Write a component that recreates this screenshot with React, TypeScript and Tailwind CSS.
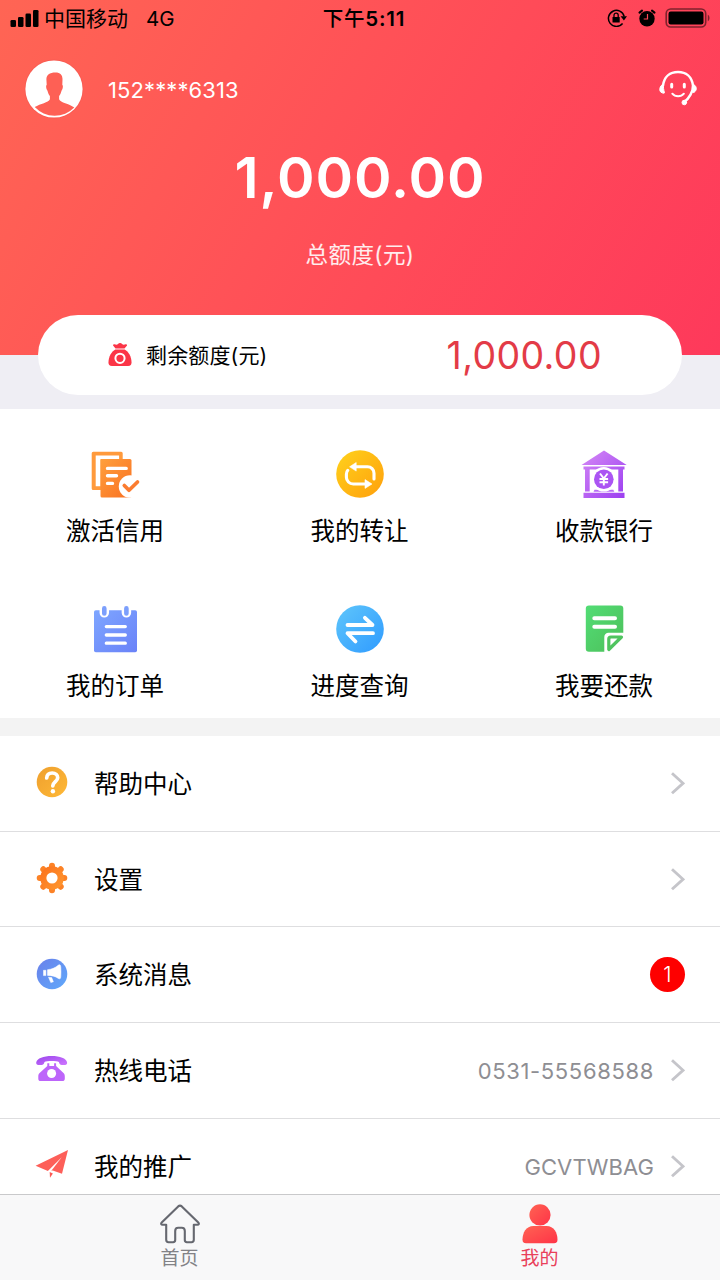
import type { ReactNode } from "react";

const Gradient = ({ id, from, to }: { id: string; from: string; to: string }) => (
    <defs>
        <linearGradient id={id} x1="0" y1="0" x2="1" y2="1">
            <stop offset="0" stopColor={from} />
            <stop offset="1" stopColor={to} />
        </linearGradient>
    </defs>
);

const CreditIcon = () => (
    <svg viewBox="0 0 48 48" className="size-12 overflow-visible" fill="none">
        <Gradient id="credit" from="#ffa03c" to="#f97022" />
        <path d="M2.200 1.700h28a1.500 1.500 0 0 1 1.500 1.500V10H10v30H2.200A1.500 1.500 0 0 1 .7 38.500V3.200a1.500 1.500 0 0 1 1.500-1.500Z" fill="#ff9a3c" />
        <path d="M4.700 5.400h23.400V9H9.500v27.200H4.700Z" fill="#fff" />
        <rect x="9.500" y="9" width="31" height="38.500" rx="1.500" fill="url(#credit)" />
        <path d="M16.500 18.400h18.700M16.500 25.800h9M16.500 33.400h5" stroke="#fff" strokeWidth="3.400" strokeLinecap="round" />
        <circle cx="39" cy="36.500" r="11.200" fill="#fff" />
        <path d="m33.300 35.500 4.700 4.800 8.500-8.300" stroke="#fb7c30" strokeWidth="3.700" strokeLinecap="round" strokeLinejoin="round" />
    </svg>
);

const TransferIcon = () => (
    <svg viewBox="0 0 48 48" className="size-12" fill="none">
        <Gradient id="transfer" from="#ffd21c" to="#ff9f0c" />
        <circle cx="24" cy="24" r="23.800" fill="url(#transfer)" />
        <path d="M18 16.800h13.500a6.500 6.500 0 0 1 6.500 6.500v5.700M11.800 20.300c-.9 1-1.400 2.200-1.400 3.700v3.200a6.800 6.800 0 0 0 6.800 6.800h14" stroke="#fff" strokeWidth="3.100" strokeLinecap="round" />
        <path d="m13.600 16.800 6.600-4.300v8.600ZM36 34l-7 4.400v-8.800Z" fill="#fff" stroke="#fff" strokeWidth=".6" strokeLinejoin="round" />
    </svg>
);

const BankIcon = () => (
    <svg viewBox="0 0 48 48" className="size-12" fill="none">
        <Gradient id="bank" from="#d68af6" to="#9a3cf0" />
        <path d="M24 .4 46.700 15H1.500ZM3.500 16.400h41v3H43V41.500h-4.700v-22H9.700v22H5v-22H3.500ZM3.500 42.800h41V48h-41Z" fill="url(#bank)" />
        <path d="M14.500 39.800h18.800l1 1.900H13.500Z" fill="#b86bf5" />
        <circle cx="23.800" cy="29.200" r="12.300" fill="#fff" />
        <circle cx="23.800" cy="29.200" r="9.800" fill="#ab55f3" />
        <path d="m20 23.500 3.800 5 3.800-5M19.500 29h8.600M19.500 32.200h8.600M23.800 28.500v7" stroke="#fff" strokeWidth="1.900" />
    </svg>
);

const OrderIcon = () => (
    <svg viewBox="0 0 48 48" className="size-12" fill="none">
        <Gradient id="order" from="#7ea6ff" to="#6a82f8" />
        <rect x="3" y="5.200" width="43" height="42" rx="1.800" fill="url(#order)" />
        <path d="M13.300 4v3.800M35.400 4v3.800" stroke="#fff" strokeWidth="9.500" strokeLinecap="round" />
        <path d="M13.300 3.400v5M35.400 3.400v5" stroke="#7c9ffc" strokeWidth="4.600" strokeLinecap="round" />
        <path d="M15.300 21.600h19M15.300 30h19M15.300 38.200h19" stroke="#fff" strokeWidth="3.300" strokeLinecap="round" />
    </svg>
);

const ProgressIcon = () => (
    <svg viewBox="0 0 48 48" className="size-12" fill="none">
        <Gradient id="progress" from="#5fc6fb" to="#2f9bff" />
        <circle cx="24" cy="24" r="23.800" fill="url(#progress)" />
        <path d="M11.500 20h25l-7.600-7.200M37 28.200H11.500l8 8.300" stroke="#fff" strokeWidth="3.800" strokeLinecap="round" strokeLinejoin="round" />
    </svg>
);

const RepayIcon = () => (
    <svg viewBox="0 0 48 48" className="size-12" fill="none">
        <Gradient id="repay" from="#52dd75" to="#4dbf5a" />
        <path d="M9 .4h31.300a3 3 0 0 1 3 3v24.400H28.500a4.200 4.200 0 0 0-4.200 4.200v14.700H9a3.200 3.200 0 0 1-3.200-3.200V3.600A3.200 3.200 0 0 1 9 .4Z" fill="url(#repay)" />
        <path d="M14.300 13.200H35M14.300 21.700H35" stroke="#fff" strokeWidth="4" strokeLinecap="round" />
        <path d="M28.800 44.500V34a2 2 0 0 1 2-2h10.700Z" stroke="#4fc45f" strokeWidth="3.200" strokeLinejoin="round" />
    </svg>
);

const HelpIcon = () => (
    <svg viewBox="0 0 32 32" className="size-8" fill="none">
        <Gradient id="help" from="#ee9f2e" to="#ffb937" />
        <circle cx="16" cy="16" r="15.300" fill="url(#help)" />
        <path d="M10.700 12c.2-3.200 2.300-5 5.500-5 3.300 0 5.500 1.900 5.500 4.700 0 3.600-4.600 4.200-4.900 8.100" stroke="#fff" strokeWidth="3.700" strokeLinecap="round" />
        <circle cx="16.900" cy="25.200" r="2.200" fill="#fff" />
    </svg>
);

const SettingsIcon = () => (
    <svg viewBox="0 0 32 32" className="size-8" fill="none">
        <Gradient id="settings" from="#fb6f1c" to="#ff9a30" />
        <g stroke="#fc8226" strokeWidth="6" strokeLinecap="round">
            <path d="M16 3.700v24.600M3.700 16h24.600M7.300 7.300l17.400 17.400M24.700 7.300 7.300 24.700" />
        </g>
        <circle cx="16" cy="16" r="11.800" fill="url(#settings)" />
        <circle cx="16" cy="16" r="5.600" fill="#fff" />
    </svg>
);

const MessageIcon = () => (
    <svg viewBox="0 0 32 32" className="size-8" fill="none">
        <Gradient id="message" from="#6a80ea" to="#5fa9fb" />
        <circle cx="16" cy="16" r="15.300" fill="url(#message)" />
        <path d="M11.500 11.700c4-.3 7.500-1.700 11-4.600 1.600-1 2.100 0 2.300 2.100a62 62 0 0 1 0 9.500c-.2 2.300-1.200 2.600-2.500 1.700-3.300-2.200-6.500-3-10.800-3ZM7.500 12.300h2.400v5.300H7.500ZM12.500 19.200l3.200.4 1.700 4.200-2.600.8Z" fill="#fff" stroke="#fff" strokeWidth=".5" strokeLinejoin="round" />
    </svg>
);

const PhoneIcon = () => (
    <svg viewBox="0 0 32 32" className="size-8" fill="none">
        <Gradient id="phone" from="#9a45ec" to="#cf77ff" />
        <path d="M.2 9.400C1 5.300 7.600 3 15.700 3s14.700 2.300 15.400 6.400c.3 1.800-1 2.600-3.300 2.600-3.500 0-4.300-.8-4.900-3.100-2-1.200-12.400-1.200-14.400 0-.6 2.300-1.400 3.100-4.900 3.100C1.200 12 0 11.200.2 9.400Z" fill="url(#phone)" />
        <path d="M11.300 10.300h2v2.600h4.800v-2.600h2v2.600l7.400 7.100c1 1 1.300 2 1.300 3.500v2.300c0 1.500-1 2.300-2.400 2.300H4.700c-1.600 0-2.400-.9-2.400-2.300v-2.300c0-1.500.3-2.500 1.300-3.500l7.700-7.100Z" fill="#bd65fa" />
        <circle cx="15.600" cy="20.500" r="4.500" fill="#fff" />
    </svg>
);

const PlaneIcon = () => (
    <svg viewBox="0 0 32 32" className="size-8 overflow-visible" fill="none">
        <path d="M32 1 26 24.700l-9.300-3.300L11.900 22-.4 16.800Z" fill="#fd5f59" />
        <path d="M25.700 8.300 11.600 22.200h3.400Z" fill="#fff" />
        <path d="m13.700 23 .3 5.700 2.900-4.300Z" fill="#fc5a55" />
    </svg>
);

const Chevron = () => (
    <svg viewBox="0 0 15 24" className="h-6 w-[15px]" fill="none">
        <path d="m2 2.300 11 10-11 10" stroke="#c5c5ca" strokeWidth="2.900" />
    </svg>
);

const StatusBar = () => (
    <div className="grid h-[37px] grid-cols-3 items-center text-black">
        <div className="flex items-center pl-[10px]">
            <svg viewBox="0 0 30 18" className="mr-[4px] h-[18px] w-[30px]">
                <rect x=".5" y="10" width="5.500" height="7" rx="1.300" />
                <rect x="8" y="7" width="5.500" height="10" rx="1.300" />
                <rect x="15.500" y="3.500" width="5.500" height="13.500" rx="1.300" />
                <rect x="23" y="0" width="5.500" height="17" rx="1.300" />
            </svg>
            <span className="text-[21px]">中国移动</span>
            <span className="mt-0.5 ml-[18px] text-[20.5px]">4G</span>
        </div>
        <div className="mt-0.5 ml-[8px] text-center text-[20.5px] font-medium tracking-[0.8px]">
            下午<span className="font-semibold">5:11</span>
        </div>
        <div className="flex items-center justify-end pr-[9px]">
            <svg viewBox="0 0 20 18" className="-mt-0.5 h-[18px] w-5" fill="none">
                <path d="M15.600 14.500a8 8 0 1 1 1.600-7" stroke="#000" strokeWidth="1.500" />
                <path d="M13.600 7.300h6.400l-3.100 4.200Z" fill="#000" />
                <rect x="5.500" y="7.900" width="7.200" height="5.600" rx=".6" fill="#000" />
                <path d="M7 8V6.300a2.100 2.100 0 0 1 4.200 0V8" stroke="#000" strokeWidth="1.300" />
            </svg>
            <svg viewBox="0 0 18 18" className="-mt-0.5 ml-[11px] size-[18px]" fill="none">
                <circle cx="9" cy="9.700" r="7.700" fill="#000" />
                <path d="M1.500 3.600 4 1.600M16.500 3.600 14 1.600" stroke="#000" strokeWidth="2.100" strokeLinecap="round" />
                <path d="M9.500 5v5H5.700" stroke="#ff4a58" strokeWidth="1.200" />
            </svg>
            <svg viewBox="0 0 46 20" className="-mt-0.5 ml-[9px] h-5 w-[46px]" fill="none">
                <rect x="1.200" y="1" width="39.500" height="18" rx="4.500" stroke="#000" strokeOpacity=".5" strokeWidth="1.600" />
                <rect x="3.500" y="3.500" width="35" height="13" rx="2.200" fill="#000" />
                <path d="M42.800 6.800v6.400c2.300-.8 2.300-5.600 0-6.400Z" fill="#000" fillOpacity=".5" />
            </svg>
        </div>
    </div>
);

const Avatar = () => (
    <svg viewBox="0 0 60 60" className="size-[60px]" fill="none">
        <circle cx="30" cy="30" r="29.500" fill="#f0554d" fillOpacity=".45" />
        <circle cx="30" cy="30" r="28.600" fill="#fff" />
        <path d="M31.500 13.400c4.900 0 7.200 2.600 7 7.200l-.2 5.200c1 .6.700 4.200-.8 6-.5 2.300-1.300 3.900-2.400 5.200v3.200c1.500 3.600 9.700 4.200 15.200 8.300a27.500 27.500 0 0 1-39.600-.4c5.800-3.700 13.600-4.300 15.200-7.900V37c-1.100-1.300-1.900-2.900-2.400-5.200-1.500-1.800-1.800-5.400-.8-6l-.3-5.200c-.2-4.600 2.900-7.200 9.100-7.200Z" fill="#fe6055" />
    </svg>
);

const ServiceIcon = () => (
    <svg viewBox="0 0 40 36" className="-mt-0.5 h-9 w-10" fill="none" stroke="#fff" strokeLinecap="round">
        <path d="M5 15.500C6.200 6.700 12 2 20 2s13.800 4.700 15 13.500c.3 6-4 13-8.500 16.300" strokeWidth="2.500" />
        <path d="M5.300 14.200c-3.800.8-5 7.600-1.200 8.600.8.500 2.200.6 2.400 0-.9-2.800-1.200-5.700-1.200-8.600ZM34.700 14.200c3.800.8 5 5.600 1.600 8-.8.400-1.500.4-1.900 0 .5-2.800.5-5.100.3-8Z" fill="#fff" strokeWidth="1" />
        <path d="M13.700 14.200v2.700M26.300 14.200v2.700" strokeWidth="3" />
        <path d="M14.300 23.700c2.900 3.500 8.700 3.500 11.600 0" strokeWidth="2" />
        <circle cx="26.300" cy="32.500" r="2.300" fill="#fff" strokeWidth="1" />
    </svg>
);

const MoneyBagIcon = () => (
    <svg viewBox="0 0 24 24" className="size-6" fill="none">
        <path d="M6.500 1.300c1.800.6 2.800.4 3.500-.3.900-1.300 3.200-1.300 4.100 0 .7.700 1.800.9 3.500.3 1.500-.3 2 1 .8 2L16.500 5.500h-9L5.700 3.300c-1.200-1-.7-2.300.8-2Z" fill="#fb3547" />
        <path d="M7.300 6.500h9.400c3.800 2 6.800 7.200 6.800 12.700 0 2.500-.8 3.800-3.500 3.800H4c-2.700 0-3.500-1.300-3.500-3.800C.5 13.700 3.500 8.500 7.300 6.500Z" fill="#fb3547" />
        <circle cx="12" cy="15.300" r="4.600" stroke="#fff" strokeWidth="2" />
        <path d="m12 12.600 2.700 2.700-2.700 2.700-2.700-2.700Z" fill="#fb3547" />
    </svg>
);

const HomeIcon = () => (
    <svg viewBox="0 0 40 40" className="size-10" fill="none" stroke="#666870" strokeWidth="2.100" strokeLinejoin="round">
        <path d="M18.200 2.400 1.700 18.500c-1 1-.5 2.300.8 2.300h3.700v15c0 1.600.8 2.400 2.300 2.400h4.600c1.400 0 2.100-.7 2.100-2.100V27c0-2.100 1-3.200 3-3.200h3.600c2 0 3 1.100 3 3.200v9.100c0 1.400.7 2.100 2.100 2.100h4.600c1.500 0 2.300-.8 2.300-2.400v-15h3.700c1.300 0 1.800-1.300.8-2.300L21.800 2.400c-1.300-1.100-2.300-1.100-3.600 0Z" />
    </svg>
);

const MineIcon = () => (
    <svg viewBox="0 0 40 40" className="size-10" fill="none">
        <Gradient id="mine" from="#ff6353" to="#ff3347" />
        <circle cx="20" cy="10.900" r="10.600" fill="url(#mine)" />
        <path d="M13.500 22h13c7.500 0 11 7 11 13.500 0 2.500-1 3.700-3.500 3.700H6c-2.500 0-3.500-1.200-3.500-3.700C2.500 29 6 22 13.500 22Z" fill="url(#mine)" />
    </svg>
);

const actions: { label: string; icon: ReactNode }[] = [
    { label: "激活信用", icon: <CreditIcon /> },
    { label: "我的转让", icon: <TransferIcon /> },
    { label: "收款银行", icon: <BankIcon /> },
    { label: "我的订单", icon: <OrderIcon /> },
    { label: "进度查询", icon: <ProgressIcon /> },
    { label: "我要还款", icon: <RepayIcon /> },
];

const rows: { label: string; icon: ReactNode; value?: ReactNode; badge?: number }[] = [
    { label: "帮助中心", icon: <HelpIcon /> },
    { label: "设置", icon: <SettingsIcon /> },
    { label: "系统消息", icon: <MessageIcon />, badge: 1 },
    { label: "热线电话", icon: <PhoneIcon />, value: <span className="tracking-[0.65px]">0531-55568588</span> },
    { label: "我的推广", icon: <PlaneIcon />, value: "GCVTWBAG" },
];

export default function App() {
    return (
        <div className="flex h-[1280px] w-[720px] flex-col overflow-hidden bg-white font-[Inter,'Noto_Sans_CJK_SC',sans-serif] whitespace-nowrap text-black">
            <header className="h-[355px] shrink-0 bg-[linear-gradient(120deg,#ff6554_0%,#ff4b58_58%,#fe395b_100%)] text-white">
                <StatusBar />
                <div className="flex items-center pt-[22px] pr-[22px] pl-6">
                    <Avatar />
                    <span className="mt-0.5 ml-6 text-[22px] tracking-[0.1px]">152****6313</span>
                    <div className="ml-auto">
                        <ServiceIcon />
                    </div>
                </div>
                <div className="mt-[24px] text-center text-[57px] leading-[70px] font-semibold tracking-[0.9px]">1,000.00</div>
                <div className="mt-[26px] text-center text-[22.5px] leading-8 tracking-[0.4px] text-white/90">总额度(元)</div>
            </header>

            <div className="h-[54px] shrink-0 bg-[#efeef4] px-[38px]">
                <div className="relative -mt-10 flex h-20 items-center rounded-full bg-white pr-20 pl-[70px]">
                    <MoneyBagIcon />
                    <span className="mt-0.5 ml-[14px] text-[21px] tracking-[0.15px]">剩余额度(元)</span>
                    <span className="mt-0.5 ml-auto text-[37.5px] tracking-[0.4px] text-[#e33b47]">1,000.00</span>
                </div>
            </div>

            <div className="grid h-[309px] shrink-0 grid-cols-[98px_98px_98px] grid-rows-[155px_154px] justify-between pr-[67px] pl-[66px]">
                {actions.map((a) => (
                    <div key={a.label} className="flex flex-col items-center pt-[41px]">
                        {a.icon}
                        <span className="mt-[15px] text-[24.5px] leading-9">{a.label}</span>
                    </div>
                ))}
            </div>
            <div className="h-[18px] shrink-0 bg-[#f3f3f3]" />

            <ul className="min-h-0 flex-1 overflow-hidden">
                {rows.map((r) => (
                    <li key={r.label} className="flex h-[95.700px] items-center border-b border-[#dedee0] pr-[35px] pl-9">
                        <div className="-mt-0.5">{r.icon}</div>
                        <span className="mt-0.5 ml-[26px] text-[24.5px]">{r.label}</span>
                        <div className="ml-auto flex items-center">
                            {r.value && <span className="mt-0.5 mr-4 text-[22px] tracking-[0.1px] text-[#8e8e93]">{r.value}</span>}
                            {r.badge ? (
                                <span className="flex size-[35px] items-center justify-center rounded-full bg-[#fe0000] text-[21px] font-light text-white">{r.badge}</span>
                            ) : (
                                <Chevron />
                            )}
                        </div>
                    </li>
                ))}
            </ul>

            <nav className="grid h-[86px] shrink-0 grid-cols-2 border-t border-[#c9c9cb] bg-[#f8f8f9]">
                <a className="flex flex-col items-center pt-[9px] pr-px text-[19px] text-[#828286]">
                    <HomeIcon />
                    <span className="mt-0.5 leading-[26px]">首页</span>
                </a>
                <a className="flex flex-col items-center pt-[9px] pr-px text-[19px] text-[#e9405a]">
                    <MineIcon />
                    <span className="mt-0.5 leading-[26px]">我的</span>
                </a>
            </nav>
        </div>
    );
}
